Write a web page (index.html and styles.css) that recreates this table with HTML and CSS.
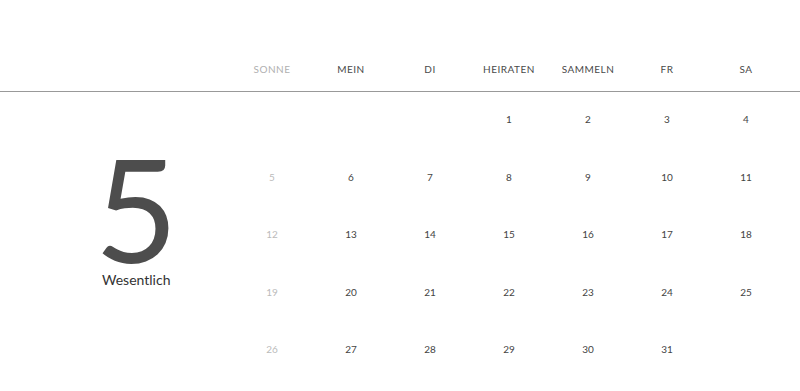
FILE: index.html
```html
<!DOCTYPE html>
<html lang="de">
<head>
<meta charset="utf-8">
<link rel="stylesheet" href="styles.css">
</head>
<body>
<div class="cal">
  <div class="head">
    <div class="spacer"></div>
    <div class="dn sun">SONNE</div>
    <div class="dn">MEIN</div>
    <div class="dn">DI</div>
    <div class="dn">HEIRATEN</div>
    <div class="dn">SAMMELN</div>
    <div class="dn">FR</div>
    <div class="dn">SA</div>
  </div>
  <div class="body">
    <div class="month">
      <div class="big">5</div>
      <div class="name">Wesentlich</div>
    </div>
    <div class="grid">
      <div class="d"></div><div class="d"></div><div class="d"></div><div class="d">1</div><div class="d">2</div><div class="d">3</div><div class="d">4</div>
      <div class="d sun">5</div><div class="d">6</div><div class="d">7</div><div class="d">8</div><div class="d">9</div><div class="d">10</div><div class="d">11</div>
      <div class="d sun">12</div><div class="d">13</div><div class="d">14</div><div class="d">15</div><div class="d">16</div><div class="d">17</div><div class="d">18</div>
      <div class="d sun">19</div><div class="d">20</div><div class="d">21</div><div class="d">22</div><div class="d">23</div><div class="d">24</div><div class="d">25</div>
      <div class="d sun">26</div><div class="d">27</div><div class="d">28</div><div class="d">29</div><div class="d">30</div><div class="d">31</div><div class="d"></div>
    </div>
  </div>
</div>
</body>
</html>
```
FILE: styles.css
```css
html, body {
  margin: 0;
  padding: 0;
  background: #fff;
}
body {
  width: 800px;
  height: 391px;
  overflow: hidden;
  font-family: Lato, "Open Sans", sans-serif;
  color: #555;
}
.cal {
  padding-top: 40px;
}
.head {
  display: grid;
  grid-template-columns: 232.5px repeat(7, 79px);
  border-bottom: 1px solid #999;
  box-sizing: border-box;
  height: 52px;
}
.dn {
  text-align: center;
  font-size: 10px;
  letter-spacing: 0.5px;
  line-height: 14px;
  padding-top: 22px;
  color: #4a4a4a;
}
.dn.sun {
  color: #b0b0b0;
}
.body {
  display: grid;
  grid-template-columns: 232.5px 553px;
}
.month {
  display: flex;
  flex-direction: column;
  align-items: center;
  padding-left: 40px;
  padding-top: 51px;
}
.big {
  font-size: 144px;
  line-height: 130px;
  height: 124px;
  color: #4d4d4d;
  font-weight: 400;
}
.name {
  margin-top: 3px;
  font-size: 14px;
  line-height: 20px;
  color: #333;
}
.grid {
  display: grid;
  grid-template-columns: repeat(7, 79px);
  grid-auto-rows: 57.5px;
}
.d {
  text-align: center;
  font-size: 10px;
  line-height: 14px;
  padding-top: 20px;
  color: #444;
}
.d.sun {
  color: #bbb;
}
```
